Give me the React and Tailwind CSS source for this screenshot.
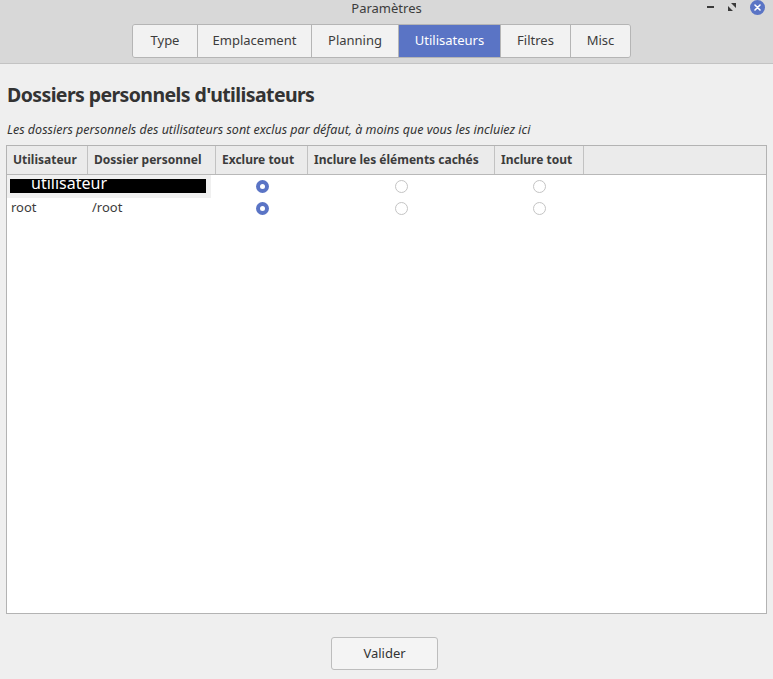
import React, { useState } from 'react';

const tabs = ['Type', 'Emplacement', 'Planning', 'Utilisateurs', 'Filtres', 'Misc'];
const tabWidths = ['w-[64px]', 'w-[114px]', 'w-[87px]', 'w-[102px]', 'w-[70px]', 'w-[60px]'];

const columns = [
  { label: 'Utilisateur', w: 'w-[81px]' },
  { label: 'Dossier personnel', w: 'w-[128px]' },
  { label: 'Exclure tout', w: 'w-[92px]' },
  { label: 'Inclure les éléments cachés', w: 'w-[187px]' },
  { label: 'Inclure tout', w: 'w-[89px]' },
];

const Radio = ({ checked, onClick }) => (
  <button onClick={onClick} className="flex items-center justify-center">
    {checked ? (
      <span className="w-[13px] h-[13px] rounded-full bg-[#5a74c5] flex items-center justify-center">
        <span className="w-[5px] h-[5px] rounded-full bg-white" />
      </span>
    ) : (
      <span className="w-[13px] h-[13px] rounded-full border border-[#c4c4c4] bg-white" />
    )}
  </button>
);

const App = () => {
  const [active, setActive] = useState('Utilisateurs');
  const [choice, setChoice] = useState({ user: 0, root: 0 });

  const rows = [
    { id: 'user', name: 'utilisateur', home: '', masked: true },
    { id: 'root', name: 'root', home: '/root' },
  ];

  return (
    <div className="w-[773px] h-[679px] flex flex-col bg-[#efefef] text-[#3c3c3c] font-['Noto_Sans',sans-serif] overflow-hidden">
      {/* header bar with window title and tabs */}
      <div className="h-[64px] bg-[#d8d8d8] border-b border-[#c3c3c3] flex flex-col">
        <div className="h-[22px] flex items-center relative">
          <div className="flex-1 text-center text-[13px] leading-none -mt-[6px]">Paramètres</div>
          <div className="absolute right-[8px] top-0 h-[14px] flex items-center gap-[14px]">
            <span className="w-[7px] h-[2px] bg-[#3a3a3a]" />
            <svg width="8" height="8" viewBox="0 0 8 8">
              <path d="M0 8V3l5 5z M8 0v5L3 0z" fill="#3a3a3a" />
            </svg>
            <span className="w-[15px] h-[15px] rounded-full bg-[#5a74c5] flex items-center justify-center">
              <svg width="7" height="7" viewBox="0 0 7 7">
                <path d="M1 1l5 5M6 1l-5 5" stroke="#fff" strokeWidth="1.6" strokeLinecap="round" />
              </svg>
            </span>
          </div>
        </div>
        <div className="flex justify-center pt-[2px] pr-[10px]">
          <div className="flex h-[34px] border border-[#b5b5b5] rounded-[3px] overflow-hidden">
            {tabs.map((t, i) => (
              <button
                key={t}
                onClick={() => setActive(t)}
                className={`${tabWidths[i]} text-[13px] flex items-center justify-center ${i > 0 ? 'border-l border-[#b5b5b5]' : ''} ${
                  active === t ? 'bg-[#5a74c5] text-white' : 'bg-[#f2f2f2] text-[#3c3c3c]'
                }`}
              >
                {t}
              </button>
            ))}
          </div>
        </div>
      </div>

      <div className="flex-1 flex flex-col px-[6px]">
        <h1 className="text-[19.5px] tracking-[-0.6px] font-bold leading-none mt-[21px] ml-[1px] text-[#333]">Dossiers personnels d'utilisateurs</h1>
        <p className="text-[12.5px] italic mt-[19px] ml-[1px] leading-none text-[#333]">
          Les dossiers personnels des utilisateurs sont exclus par défaut, à moins que vous les incluiez ici
        </p>

        <div className="mt-[9px] h-[469px] border border-[#b3b3b3] bg-white flex flex-col">
          <div className="h-[29px] flex bg-[#ebebeb] border-b border-[#b8b8b8]">
            {columns.map((c) => (
              <div key={c.label} className={`${c.w} border-r border-[#c2c2c2] text-[12px] font-bold px-[6px] flex items-center whitespace-nowrap`}>
                {c.label}
              </div>
            ))}
            <div className="flex-1" />
          </div>

          {rows.map((r) => (
            <div key={r.id} className="h-[22px] flex items-center text-[13px]">
              {r.masked ? (
                <div className="w-[209px] h-[22px] flex">
                  <div className="w-[204px] h-[23px] bg-[#f0f0f0] pl-[3px] pt-[4px]">
                    <div className="w-[196px] h-[14px] bg-black overflow-hidden">
                      <span className="block text-white text-[16px] leading-none ml-[21px] -mt-[4px]">{r.name}</span>
                    </div>
                  </div>
                </div>
              ) : (
                <>
                  <div className="w-[81px] pl-[4px]">{r.name}</div>
                  <div className="w-[128px] pl-[4px]">{r.home}</div>
                </>
              )}
              {[0, 1, 2].map((k) => (
                <div key={k} className={`${columns[k + 2].w} flex justify-center`}>
                  <Radio checked={choice[r.id] === k} onClick={() => setChoice({ ...choice, [r.id]: k })} />
                </div>
              ))}
            </div>
          ))}
        </div>

        <div className="flex justify-center mt-[23px] pr-[4px]">
          <button className="w-[107px] h-[33px] bg-[#f4f4f4] border border-[#bdbdbd] rounded-[3px] text-[13px] text-[#333]">
            Valider
          </button>
        </div>
      </div>
    </div>
  );
};

export default App;
